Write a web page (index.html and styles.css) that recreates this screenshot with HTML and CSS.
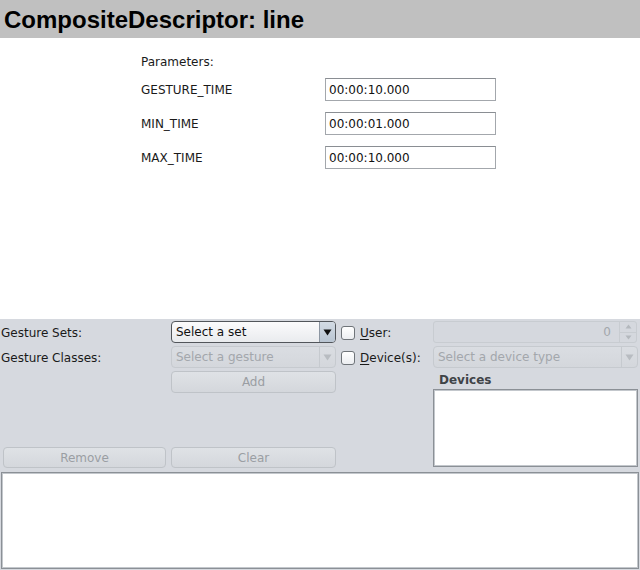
FILE: index.html
```html
<!DOCTYPE html>
<html>
<head>
<meta charset="utf-8">
<link rel="stylesheet" href="styles.css">
</head>
<body>
<div class="app">
  <header class="title">CompositeDescriptor: line</header>
  <section class="params">
    <div class="params-head">Parameters:</div>
    <div class="params-grid">
      <div class="plabel">GESTURE_TIME</div>
      <div class="pinput">00:00:10.000</div>
      <div class="plabel">MIN_TIME</div>
      <div class="pinput">00:00:01.000</div>
      <div class="plabel">MAX_TIME</div>
      <div class="pinput">00:00:10.000</div>
    </div>
  </section>
  <section class="panel">
    <div class="grid">
      <div class="lbl r1">Gesture Sets:</div>
      <div class="combo active r1">
        <span class="combo-text">Select a set</span>
        <span class="combo-btn"><svg width="9" height="7" viewBox="0 0 9 7"><path d="M0.5 0.5h8L4.5 6.5z" fill="#111"/></svg></span>
      </div>
      <label class="check r1"><span class="box"></span><span><u>U</u>ser:</span></label>
      <div class="spinner r1">
        <span class="spin-val">0</span>
        <span class="spin-btns">
          <span class="spin-b"><svg width="7" height="5" viewBox="0 0 7 5"><path d="M0.5 4.5L3.5 0.5L6.5 4.5z" fill="#b4b8bd"/></svg></span>
          <span class="spin-b"><svg width="7" height="5" viewBox="0 0 7 5"><path d="M0.5 0.5h6L3.5 4.5z" fill="#b4b8bd"/></svg></span>
        </span>
      </div>

      <div class="lbl r2">Gesture Classes:</div>
      <div class="combo disabled r2 c2">
        <span class="combo-text">Select a gesture</span>
        <span class="combo-btn"><svg width="9" height="7" viewBox="0 0 9 7"><path d="M0.5 0.5h8L4.5 6.5z" fill="#b8bcc1"/></svg></span>
      </div>
      <label class="check r2 c3"><span class="box"></span><span><u>D</u>evice(s):</span></label>
      <div class="combo disabled wide r2 c4">
        <span class="combo-text">Select a device type</span>
        <span class="combo-btn"><svg width="9" height="7" viewBox="0 0 9 7"><path d="M0.5 0.5h8L4.5 6.5z" fill="#b8bcc1"/></svg></span>
      </div>

      <div class="btn add">Add</div>

      <div class="devices">
        <div class="dev-title">Devices</div>
        <div class="dev-list"></div>
      </div>

      <div class="btn remove">Remove</div>
      <div class="btn clear">Clear</div>
    </div>
    <div class="output"></div>
  </section>
</div>
</body>
</html>
```
FILE: styles.css
```css
html, body {
  margin: 0;
  padding: 0;
}
body {
  width: 640px;
  height: 570px;
  overflow: hidden;
  background: #ffffff;
  font-family: "DejaVu Sans", "Noto Sans", sans-serif;
  font-size: 12px;
  color: #1a1a1a;
}
.app {
  display: flex;
  flex-direction: column;
  height: 570px;
}
.title {
  height: 38px;
  box-sizing: border-box;
  padding: 6px 4px 0 4px;
  background: #c0c0c0;
  font-family: "Liberation Sans", Arial, sans-serif;
  font-weight: bold;
  font-size: 24px;
  line-height: 28px;
  color: #000;
}
.params {
  height: 281px;
  box-sizing: border-box;
  padding: 12px 0 0 141px;
  background: #fff;
}
.params-head {
  height: 23px;
  line-height: 25px;
  margin-bottom: 5px;
}
.params-grid {
  display: grid;
  grid-template-columns: 184px 171px;
  grid-auto-rows: 23px;
  row-gap: 11px;
}
.plabel {
  line-height: 25px;
}
.pinput {
  box-sizing: border-box;
  border: 1px solid #a3a7ac;
  border-top-color: #8a8e93;
  background: #fff;
  padding-left: 3px;
  line-height: 22px;
  color: #111;
}
.panel {
  flex: 1;
  background: #d6d9df;
  padding-top: 2px;
  display: flex;
  flex-direction: column;
}
.grid {
  display: grid;
  grid-template-columns: 164px 165px 87px 204px;
  grid-template-rows: 22px 22px 22px 48px 21px;
  column-gap: 5px;
  row-gap: 3px;
  padding-left: 2px;
}
.r1 { grid-row: 1; }
.r2 { grid-row: 2; }
.c2 { grid-column: 2; }
.c3 { grid-column: 3; }
.c4 { grid-column: 4; }
.lbl {
  margin-left: -1px;
  line-height: 24px;
  color: #1a1a1a;
}
.combo {
  box-sizing: border-box;
  display: flex;
  border-radius: 4px;
  overflow: hidden;
}
.combo-text {
  flex: 1;
  padding-left: 4px;
  line-height: 21px;
}
.combo-btn {
  width: 15px;
  display: flex;
  align-items: center;
  justify-content: center;
}
.combo.active {
  border: 1px solid #52565b;
  background: linear-gradient(#fbfbfc, #e9ebee);
  color: #111;
}
.combo.active .combo-btn {
  border-left: 1px solid #8c96a2;
  background: linear-gradient(#d3dbe4, #b9c5d2);
}
.combo.disabled {
  border: 1px solid #c6cacf;
  background: linear-gradient(#dadde2, #d4d7dc);
  color: #a3a7ac;
}
.combo.disabled .combo-btn {
  border-left: 1px solid #c6cacf;
}
.combo.wide {
  width: 205px;
}
.check {
  display: flex;
  align-items: center;
  gap: 5px;
  color: #1a1a1a;
  padding-top: 1px;
}
.check u {
  text-decoration: underline;
  text-underline-offset: 2px;
}
.box {
  width: 12px;
  height: 12px;
  border: 1px solid #6f7479;
  border-radius: 3px;
  background: linear-gradient(#ffffff, #eceef1);
}
.spinner {
  box-sizing: border-box;
  display: flex;
  border: 1px solid #c8ccd1;
  border-radius: 3px;
  background: #d5d8de;
  color: #a3a7ac;
}
.spin-val {
  flex: 1;
  text-align: right;
  padding-right: 8px;
  line-height: 21px;
}
.spin-btns {
  width: 16px;
  display: flex;
  flex-direction: column;
  border-left: 1px solid #c8ccd1;
}
.spin-b {
  flex: 1;
  display: flex;
  align-items: center;
  justify-content: center;
}
.spin-b + .spin-b {
  border-top: 1px solid #c8ccd1;
}
.btn {
  box-sizing: border-box;
  border: 1px solid #bfc3c8;
  border-radius: 4px;
  background: linear-gradient(#dfe2e6, #d4d7dc);
  color: #9a9ea3;
  text-align: center;
  line-height: 20px;
}
.add {
  grid-row: 3;
  grid-column: 2;
}
.remove {
  grid-row: 5;
  grid-column: 1;
  margin-left: 1px;
}
.clear {
  grid-row: 5;
  grid-column: 2;
}
.devices {
  grid-row: 3 / 6;
  grid-column: 4;
  display: flex;
  flex-direction: column;
  padding-bottom: 1px;
}
.dev-title {
  height: 18px;
  line-height: 18px;
  padding-left: 6px;
  font-weight: bold;
  color: #3f4347;
}
.dev-list {
  flex: 1;
  width: 205px;
  box-sizing: border-box;
  border: 1px solid #8b9096;
  box-shadow: inset 0 0 0 1px #c3c7cc;
  background: #fff;
}
.output {
  margin: 4px 1px 0 1px;
  height: 97px;
  box-sizing: border-box;
  border: 1px solid #8b9096;
  box-shadow: inset 0 0 0 1px #c3c7cc;
  background: #fff;
}
```
